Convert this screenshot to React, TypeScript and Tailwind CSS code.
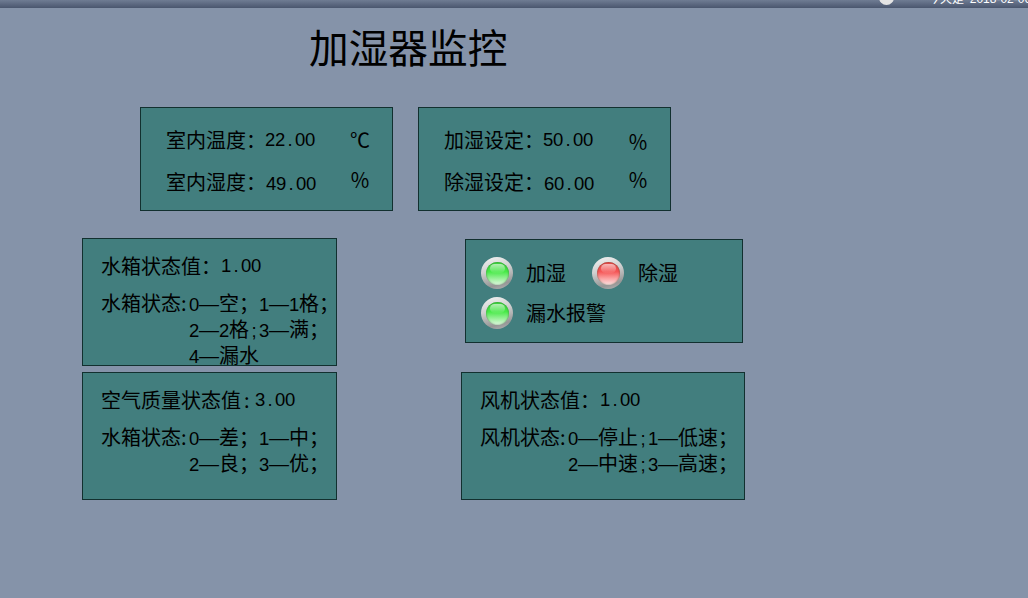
const cjk = "font-['Noto_Sans_CJK_SC','Noto_Sans_CJK_JP',sans-serif]";
const COLON = "\uFF1A";
const SEMI = "\uFF1B";
const PCT = "\uFF05";

// digits, dots and half width ; sit in 10px cells like the panel's bitmap font
function Num({ text }: { text: string }) {
  return (
    <>
      {text.split("").map((ch, i) =>
        /[0-9.;]/.test(ch) ? (
          <span key={i} className="inline-block w-[10px] text-center font-['Liberation_Sans',sans-serif] text-[18.5px] leading-none">
            {ch}
          </span>
        ) : ch === "—" ? (
          <span key={i} className="font-['Liberation_Sans',sans-serif] leading-none">
            {ch}
          </span>
        ) : (
          <span key={i}>{ch}</span>
        ),
      )}
    </>
  );
}

function Reading({ label, value, unit, valueClass, unitClass }: { label: string; value: string; unit: string; valueClass: string; unitClass: string }) {
  return (
    <div className="flex h-[24px] items-center">
      <span className="w-[99px] shrink-0 whitespace-nowrap">
        {label}
        <span className="inline-block w-[19px] overflow-visible">{COLON}</span>
      </span>
      <span className={`${valueClass} shrink-0 whitespace-nowrap`}>
        <Num text={value} />
      </span>
      <span className={`${unitClass} shrink-0`}>{unit}</span>
    </div>
  );
}

function Led({ on }: { on: "green" | "red" }) {
  const inner =
    on === "green"
      ? "bg-[linear-gradient(180deg,#3fd43f_0%,#48ea48_42%,#94f094_70%,#e2f9e2_100%)]"
      : "bg-[linear-gradient(180deg,#ea4a4a_0%,#f55656_42%,#fb9e9e_70%,#fde4e4_100%)]";
  return (
    <span className="flex h-[32px] w-[32px] shrink-0 items-center justify-center rounded-full bg-[linear-gradient(165deg,#f4f4f4_0%,#d0d0d0_40%,#969696_80%,#b8b8b8_100%)]">
      <span className={`relative h-[23px] w-[23px] overflow-hidden rounded-full shadow-[inset_0_0_2px_rgba(0,40,0,0.55)] ${inner}`}>
        <span className="absolute left-[4px] top-[2px] h-[9px] w-[15px] rounded-full bg-[linear-gradient(180deg,rgba(255,255,255,0.6),rgba(255,255,255,0.05))]" />
      </span>
    </span>
  );
}

function Panel({ className, children }: { className: string; children: React.ReactNode }) {
  return <div className={`shrink-0 border border-[#12302f] bg-[#427e7e] text-black ${className}`}>{children}</div>;
}

function StateLabel({ text }: { text: string }) {
  return <span className="w-[88px] shrink-0 whitespace-nowrap">{text}:</span>;
}

export default function App() {
  return (
    <div className={`h-[598px] w-[1028px] overflow-hidden bg-[#8593a9] text-[20px] leading-[26px] ${cjk}`}>
      <div className="flex h-[8px] items-start overflow-hidden bg-[linear-gradient(180deg,#6f7c93,#4a566e)] pl-[879px]">
        <span className="mt-[-10px] h-[15px] w-[15px] shrink-0 rounded-full bg-[#e4e4e4]" />
        <span className="ml-[34px] mt-[-9px] whitespace-nowrap text-[12px] leading-[14px] text-white">
          今天是 <span className="ml-[3px] font-['Liberation_Sans',sans-serif]">2018-02-06</span>
        </span>
      </div>

      <h1 className="ml-[309px] mt-[13px] text-[39.7px] leading-[50px] font-normal">加湿器监控</h1>

      <div className="ml-[140px] mt-[36px] flex gap-[25px]">
        <Panel className="flex h-[104px] w-[253px] flex-col gap-[18px] pl-[25px] pt-[20px]">
          <Reading label="室内温度" value="22.00" unit="℃" valueClass="w-[85px] -translate-y-[2px]" unitClass="" />
          <Reading label="室内湿度" value="49.00" unit={PCT} valueClass="ml-px w-[84px]" unitClass="-translate-y-[2px]" />
        </Panel>
        <Panel className="flex h-[104px] w-[253px] flex-col gap-[18px] pl-[25px] pt-[20px]">
          <Reading label="加湿设定" value="50.00" unit={PCT} valueClass="w-[85px] -translate-y-[2px]" unitClass="translate-y-[2px]" />
          <Reading label="除湿设定" value="60.00" unit={PCT} valueClass="ml-px w-[84px]" unitClass="-translate-y-[2px]" />
        </Panel>
      </div>

      <div className="ml-[82px] mt-[27px] flex items-start">
        <Panel className="h-[128px] w-[255px] pl-[18px] pt-[14px]">
          <div className="flex items-center">
            <span className="w-[120px] shrink-0 whitespace-nowrap">水箱状态值{COLON}</span>
            <Num text="1.00" />
          </div>
          <div className="mt-[11px] flex">
            <StateLabel text="水箱状态" />
            <div className="whitespace-nowrap">
              <div><Num text={`0—空${SEMI}1—1格${SEMI}`} /></div>
              <div><Num text={`2—2格;3—满${SEMI}`} /></div>
              <div><Num text="4—漏水" /></div>
            </div>
          </div>
        </Panel>
        <Panel className="ml-[128px] mt-[1px] h-[104px] w-[278px] pl-[15px] pt-[17px]">
          <div className="flex items-center">
            <Led on="green" />
            <span className="ml-[13px]">加湿</span>
            <span className="ml-[26px]"><Led on="red" /></span>
            <span className="ml-[14px]">除湿</span>
          </div>
          <div className="mt-[8px] flex items-center">
            <Led on="green" />
            <span className="ml-[13px]">漏水报警</span>
          </div>
        </Panel>
      </div>

      <div className="ml-[82px] mt-[6px] flex items-start">
        <Panel className="h-[128px] w-[255px] pl-[18px] pt-[14px]">
          <div className="flex items-center">
            <span className="w-[140px] shrink-0 whitespace-nowrap">空气质量状态值</span>
            <span className="w-[14px] shrink-0 pl-[3px]">:</span>
            <Num text="3.00" />
          </div>
          <div className="mt-[11px] flex">
            <StateLabel text="水箱状态" />
            <div className="whitespace-nowrap">
              <div><Num text={`0—差${SEMI}1—中${SEMI}`} /></div>
              <div><Num text={`2—良${SEMI}3—优${SEMI}`} /></div>
            </div>
          </div>
        </Panel>
        <Panel className="ml-[124px] h-[128px] w-[284px] pl-[18px] pt-[14px]">
          <div className="flex items-center">
            <span className="w-[120px] shrink-0 whitespace-nowrap">风机状态值{COLON}</span>
            <Num text="1.00" />
          </div>
          <div className="mt-[11px] flex">
            <StateLabel text="风机状态" />
            <div className="whitespace-nowrap">
              <div><Num text={`0—停止;1—低速${SEMI}`} /></div>
              <div><Num text={`2—中速;3—高速${SEMI}`} /></div>
            </div>
          </div>
        </Panel>
      </div>
    </div>
  );
}
